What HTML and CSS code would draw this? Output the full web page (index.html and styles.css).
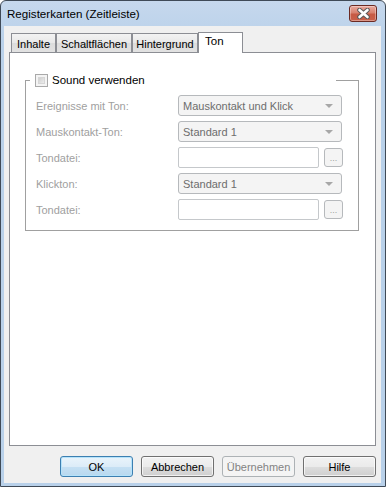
FILE: index.html
```html
<!DOCTYPE html>
<html lang="de">
<head>
    <meta charset="UTF-8">
    <title>Registerkarten (Zeitleiste)</title>
    <link rel="stylesheet" href="styles.css">
</head>
<body>
    <div class="window">
        <div class="titlebar">
            <span class="title">Registerkarten (Zeitleiste)</span>
            <span class="close-button">
                <svg width="15" height="11" viewBox="0 0 15 11">
                    <path d="M3.5 2 L11.5 9 M11.5 2 L3.5 9" stroke="#5a5a5a" stroke-width="4.6" stroke-linecap="round"/>
                    <path d="M3.5 2 L11.5 9 M11.5 2 L3.5 9" stroke="#ffffff" stroke-width="2.6" stroke-linecap="round"/>
                </svg>
            </span>
        </div>

        <div class="client">
            <div class="tabs">
                <span class="tab tab-inhalte">Inhalte</span>
                <span class="tab tab-schalt">Schaltflächen</span>
                <span class="tab tab-hinter">Hintergrund</span>
                <span class="tab active">Ton</span>
            </div>

            <div class="tab-panel">
                <fieldset class="group">
                    <legend class="group-title">
                        <span class="checkbox"><span class="checkbox-inner"></span></span>
                        <span>Sound verwenden</span>
                    </legend>

                    <div class="form-row">
                        <span class="label">Ereignisse mit Ton:</span>
                        <span class="combo">Mauskontakt und Klick<span class="arrow"></span></span>
                    </div>
                    <div class="form-row">
                        <span class="label">Mauskontakt-Ton:</span>
                        <span class="combo">Standard 1<span class="arrow"></span></span>
                    </div>
                    <div class="form-row">
                        <span class="label">Tondatei:</span>
                        <span class="textbox"></span>
                        <span class="browse">...</span>
                    </div>
                    <div class="form-row">
                        <span class="label">Klickton:</span>
                        <span class="combo">Standard 1<span class="arrow"></span></span>
                    </div>
                    <div class="form-row">
                        <span class="label">Tondatei:</span>
                        <span class="textbox"></span>
                        <span class="browse">...</span>
                    </div>
                </fieldset>
            </div>

            <div class="buttons">
                <button type="button" class="default">OK</button>
                <button type="button">Abbrechen</button>
                <button type="button" disabled>Übernehmen</button>
                <button type="button">Hilfe</button>
            </div>
        </div>
    </div>
</body>
</html>
```

FILE: styles.css
```css
body {
    margin: 0;
    padding: 0;
    font-family: "Liberation Sans", Arial, sans-serif;
    font-size: 11px;
    background-color: #ffffff;
}
.window {
    width: 386px;
    height: 487px;
    box-sizing: border-box;
    border: 1px solid #3f4a57;
    border-radius: 6px 6px 0 0;
    background: linear-gradient(#c6d8ed, #b9d1ea 40px, #b9d1ea);
    padding: 0 4px 4px 3px;
    display: flex;
    flex-direction: column;
}
.titlebar {
    height: 25px;
    display: flex;
    align-items: center;
    justify-content: space-between;
    flex-shrink: 0;
}
.title {
    font-size: 11.6px;
    color: #000000;
    margin-left: 3px;
    margin-top: -1px;
}
.close-button {
    width: 26px;
    height: 15px;
    border: 1px solid #6b2a23;
    border-radius: 3px;
    background: linear-gradient(#e9a99f, #d8826f 45%, #c75a44 55%, #c9604a);
    display: flex;
    align-items: center;
    justify-content: center;
    margin-right: 4px;
    margin-top: -1px;
    box-shadow: inset 0 0 0 1px rgba(255, 255, 255, 0.35);
}
.client {
    flex: 1;
    background-color: #f0f0f0;
    padding: 6px 5px 6px 5px;
    display: flex;
    flex-direction: column;
}
.tabs {
    display: flex;
    align-items: flex-end;
    height: 20px;
    padding-left: 2px;
}
.tab {
    height: 19px;
    box-sizing: border-box;
    border: 1px solid #8c8e94;
    border-bottom: none;
    background: linear-gradient(#f3f3f3, #e8e8e8 50%, #dcdcdc 51%, #e2e2e2);
    display: flex;
    align-items: center;
    justify-content: center;
    color: #000000;
    padding-top: 1px;
}
.tab-inhalte { width: 45px; }
.tab-schalt { width: 76px; }
.tab-hinter { width: 66px; }
.tab.active {
    width: 45px;
    height: 21px;
    background: #ffffff;
    margin-bottom: -1px;
    position: relative;
    align-items: flex-start;
    padding-top: 2px;
    justify-content: flex-start;
    padding-left: 6px;
    font-size: 11.5px;
}
.tab-panel {
    height: 394px;
    box-sizing: border-box;
    border: 1px solid #8c8e94;
    background-color: #ffffff;
    padding: 20px 16px 0 15px;
}
.group {
    margin: 0;
    border: 1px solid #a0a0a0;
    padding: 8px 0 10px 10px;
}
.group-title {
    width: 306px;
    height: 14px;
    box-sizing: border-box;
    margin-left: -6px;
    padding: 0 0 0 5px;
    display: flex;
    align-items: center;
    gap: 4px;
    font-size: 11.5px;
    color: #000000;
}
.checkbox {
    width: 13px;
    height: 13px;
    box-sizing: border-box;
    border: 1px solid #a9a9a9;
    background-color: #f4f4f4;
    padding: 2px;
}
.checkbox-inner {
    display: block;
    width: 7px;
    height: 7px;
    background: linear-gradient(135deg, #cfcfcf, #ececec);
    border: 1px solid #d6d6d6;
    box-sizing: border-box;
}
.form-row {
    display: flex;
    align-items: center;
    height: 21px;
    margin-bottom: 5px;
}
.form-row:last-child {
    margin-bottom: 0;
}
.label {
    width: 142px;
    color: #a0a0a0;
    font-size: 11px;
}
.combo {
    width: 164px;
    height: 21px;
    box-sizing: border-box;
    border: 1px solid #b6b9bc;
    border-radius: 3px;
    background-color: #f4f4f4;
    color: #6d6d6d;
    font-size: 11px;
    display: flex;
    align-items: center;
    justify-content: space-between;
    padding: 0 8px 0 4px;
}
.arrow {
    width: 0;
    height: 0;
    border-left: 4px solid transparent;
    border-right: 4px solid transparent;
    border-top: 4px solid #a7a7a7;
}
.textbox {
    width: 141px;
    height: 21px;
    box-sizing: border-box;
    border: 1px solid #c5c8cb;
    border-radius: 2px;
    background-color: #ffffff;
}
.browse {
    width: 19px;
    height: 19px;
    box-sizing: border-box;
    margin-left: 5px;
    border: 1px solid #b6b9bc;
    border-radius: 3px;
    background-color: #f4f4f4;
    color: #a0a0a0;
    font-size: 9px;
    display: flex;
    align-items: flex-end;
    justify-content: center;
    padding-bottom: 3px;
}
.buttons {
    display: flex;
    justify-content: flex-end;
    gap: 8px;
    margin-top: 10px;
}
.buttons button {
    width: 73px;
    height: 21px;
    border: 1px solid #707070;
    border-radius: 3px;
    background: linear-gradient(#f2f2f2, #ebebeb 50%, #dddddd 51%, #cfcfcf);
    font-family: "Liberation Sans", Arial, sans-serif;
    font-size: 11px;
    color: #000000;
    padding: 0;
    box-shadow: inset 0 0 0 1px rgba(255, 255, 255, 0.7);
}
.buttons button.default {
    border-color: #3c7fb1;
    background: linear-gradient(#eaf4fb, #dcecf8 50%, #c5e0f3 51%, #b8d8ef);
    box-shadow: inset 0 0 0 1px #b6e3fa;
}
.buttons button:disabled {
    border-color: #adb2b5;
    background: #f4f4f4;
    color: #838383;
    box-shadow: none;
}
```
